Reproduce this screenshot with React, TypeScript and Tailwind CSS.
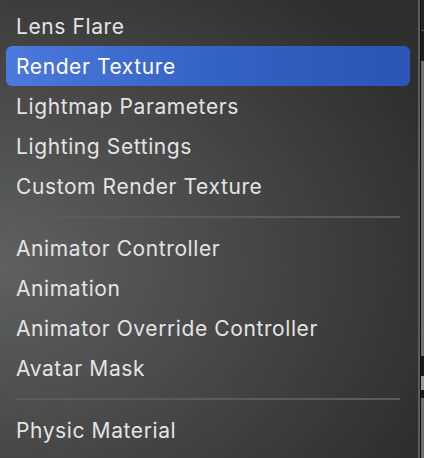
const groups: string[][] = [
  ['Lens Flare', 'Render Texture', 'Lightmap Parameters', 'Lighting Settings', 'Custom Render Texture'],
  ['Animator Controller', 'Animation', 'Animator Override Controller', 'Avatar Mask'],
  ['Physic Material'],
];

const selected = 'Render Texture';

function MenuItem({ label }: { label: string }) {
  const active = label === selected;
  return (
    <div
      className={
        active
          ? 'ml-[6px] mr-[8px] flex h-10 items-center rounded-[6px] bg-gradient-to-r from-[#4b79dc] via-[#3562c5] to-[#2b55b6] px-[10px] text-white'
          : 'ml-[6px] mr-[8px] flex h-10 items-center px-[10px] text-[#e4e4e4]'
      }
    >
      <span className="text-[21px] leading-none tracking-[0.6px]">{label}</span>
    </div>
  );
}

export default function App() {
  return (
    <div className="flex h-[458px] w-[424px] overflow-hidden bg-[#6e6e6e] font-['Inter','Noto_Sans',sans-serif]">
      <div className="flex h-full w-[418px] shrink-0 flex-col bg-[radial-gradient(ellipse_470px_360px_at_0%_58%,#5f615f_0%,#4a4b4a_45%,#2e2f2e_100%)] pt-[6px]">
        {groups.map((items, gi) => (
          <div key={gi}>
            {gi > 0 && (
              <div className="flex h-[22px] items-center pl-4 pr-[18px]">
                <div className="h-[2px] w-full bg-[#5a5b5a]" />
              </div>
            )}
            {items.map((label) => (
              <MenuItem key={label} label={label} />
            ))}
          </div>
        ))}
      </div>
      <div className="w-[2px] shrink-0 bg-[#5c5c5c]" />
      <div className="w-px shrink-0 bg-[#111]" />
      <div className="flex flex-1 flex-col">
        <div className="h-[30px] bg-[#242424]" />
        <div className="h-px bg-[#555]" />
        <div className="h-[30px] bg-[#1e1e1e]" />
        <div className="flex-1 bg-[#6f6f6f]" />
        <div className="h-[20px] bg-[#1a1a1a]" />
        <div className="h-[14px] bg-[#9a9a9a]" />
        <div className="h-[8px] bg-[#1a1a1a]" />
        <div className="h-[60px] bg-[#6f6f6f]" />
      </div>
    </div>
  );
}
